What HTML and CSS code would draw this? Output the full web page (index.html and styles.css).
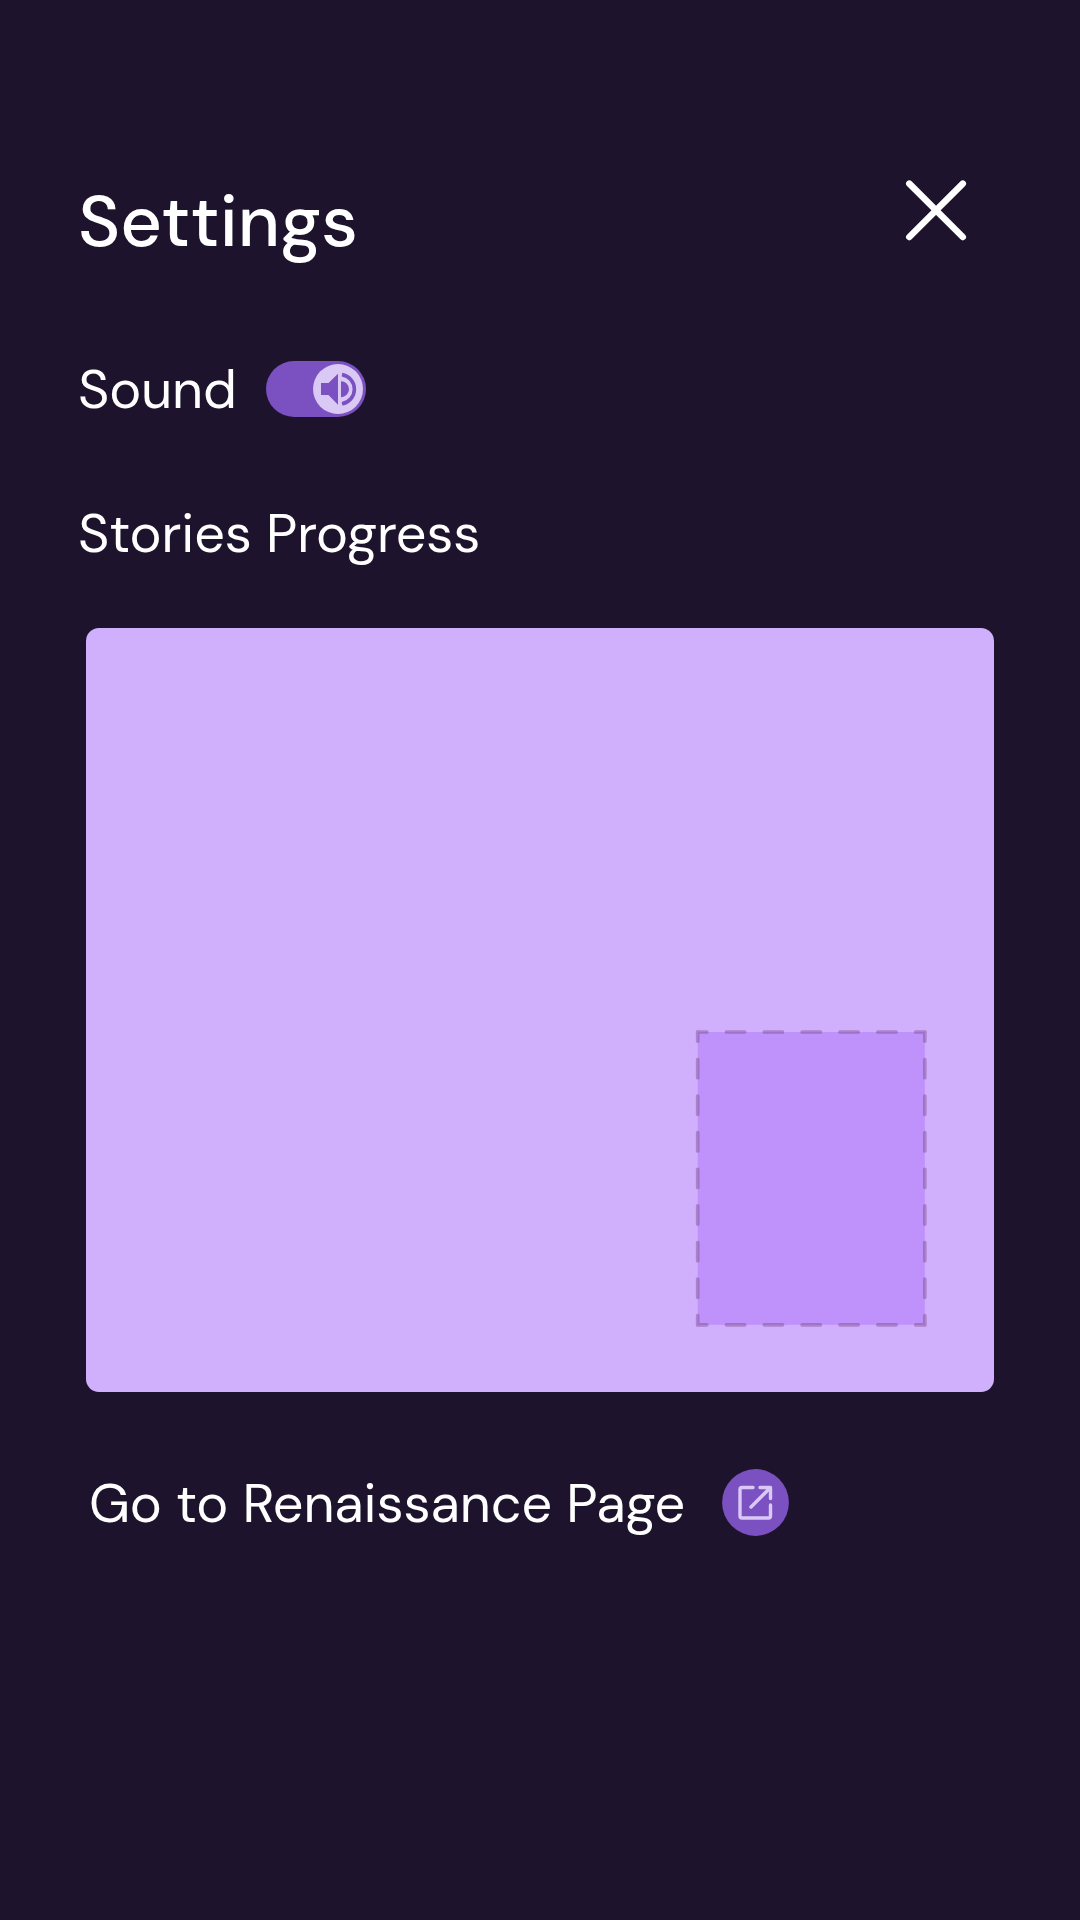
FILE: index.html
```html
<!DOCTYPE html>
<html lang="en">
<head>
<meta charset="utf-8">
<title>Settings</title>
<link rel="stylesheet" href="styles.css">
</head>
<body>
<main class="settings">
  <header class="header">
    <h1 class="title">Settings</h1>
    <button class="close" aria-label="Close">
      <svg width="64" height="64" viewBox="0 0 64 64"><path d="M5.3 5.6 58.8 59M58.8 5.6 5.3 59"/></svg>
    </button>
  </header>
  <section class="row sound">
    <span class="label label-sound">Sound</span>
    <button class="toggle" role="switch" aria-checked="true" aria-label="Sound">
      <svg class="knob" width="50" height="50" viewBox="0 0 50 50">
        <circle class="knob-bg" cx="25" cy="25" r="25"/>
        <path class="speaker" d="M8 19H15.5L25 9.8V40.8L15.5 31H8ZM28 17.2A8 8 0 0 1 28 33.2Z"/>
        <path class="wave" d="M29 10.6A14.8 14.8 0 0 1 29 39.8"/>
      </svg>
    </button>
  </section>
  <h2 class="label label-progress">Stories Progress</h2>
  <section class="card">
    <svg class="slot" width="232" height="298" viewBox="0 0 232 298">
      <rect class="slot-fill" x="2.7" y="3" width="227.1" height="292.8"/>
      <g class="slot-outline">
        <path class="slot-h" d="M2.7 3H229.8M2.7 295.8H229.8"/>
        <path class="slot-v" d="M2.7 3V295.8M229.8 3V295.8"/>
      </g>
    </svg>
  </section>
  <a class="row page-link">
    <span class="label label-link">Go to Renaissance Page</span>
    <svg class="open" width="67" height="67" viewBox="0 0 67 67">
      <circle class="open-bg" cx="33.5" cy="33.5" r="33.4"/>
      <path class="open-line" d="M31 18.5H20Q18 18.5 18 20.5V47Q18 49 20 49H46.5Q48.5 49 48.5 47V36M38 18.5H48.5V29.5M48 19 29 38"/>
    </svg>
  </a>
</main>
</body>
</html>
```
FILE: styles.css
```css
* { box-sizing: border-box; }
body { margin: 0; background: #1e132d; color: #fff; font-family: "DM Sans", Inter, sans-serif; }
button { padding: 0; border: 0; background: none; }
svg { display: block; flex: none; }
.settings { display: flex; flex-direction: column; height: 1920px; padding: 178px 85px 0 78px; }
.header { display: flex; justify-content: space-between; height: 84px; padding-right: 27px; }
.title { margin: 2px 0 0; font-size: 72px; line-height: 84px; font-weight: 500; letter-spacing: .1px; }
.close { height: 64px; }
.close path { fill: none; stroke: #fff; stroke-width: 6.5; stroke-linecap: round; }
.row { display: flex; align-items: center; height: 64px; }
.label { margin: 0; padding-top: 1px; font-size: 54px; line-height: 64px; font-weight: 400; letter-spacing: -.1px; white-space: nowrap; }
.sound { margin-top: 95px; }
.label-sound { width: 188px; padding-top: 2px; }
.toggle { display: flex; justify-content: flex-end; width: 100px; height: 56px; padding: 3px; border-radius: 28px; background: #7b50c0; }
.knob-bg { fill: #dac8f5; }
.speaker { fill: #7b50c0; }
.wave { fill: none; stroke: #7b50c0; stroke-width: 3.6; }
.label-progress { margin-top: 80px; }
.card { display: flex; justify-content: flex-end; align-items: flex-end; width: 908px; height: 763.6px; margin: 62px 0 0 8px; padding: 0 67px 64.6px 0; border-radius: 13px; background: #d0affc; }
.slot-fill { fill: #bf91fb; }
.slot-outline { opacity: .36; }
.slot-h, .slot-v { fill: none; stroke: #683a6e; stroke-width: 3.7; stroke-linecap: round; }
.slot-h { stroke-dasharray: 18.2 19.65; stroke-dashoffset: 9.1; }
.slot-v { stroke-dasharray: 18.2 18.4; stroke-dashoffset: 9.1; }
.page-link { margin: 79.4px 0 0 11px; }
.label-link { width: 633px; padding-top: 2px; }
.open-bg { fill: #7b50c0; }
.open-line { fill: none; stroke: #dac8f5; stroke-width: 3.4; stroke-linecap: round; stroke-linejoin: round; }
```
